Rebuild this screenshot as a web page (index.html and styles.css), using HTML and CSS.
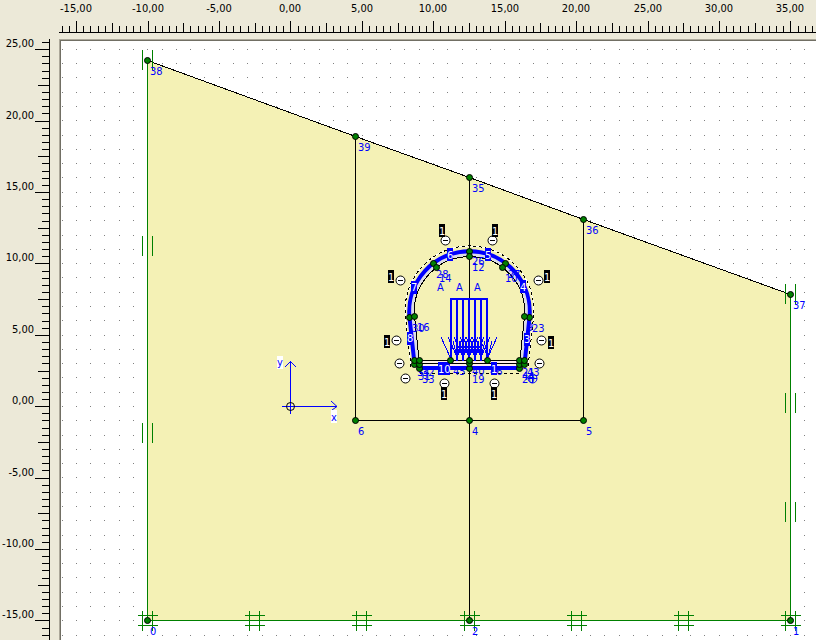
FILE: index.html
```
<!DOCTYPE html>
<html lang="en">
<head>
<meta charset="utf-8">
<title>Tunnel geometry model</title>
<link rel="stylesheet" href="styles.css">
</head>
<body>
<main class="editor">
  <div class="corner"></div>
  <svg class="ruler ruler-x" id="ruler-x" aria-label="Horizontal ruler"></svg>
  <svg class="ruler ruler-y" id="ruler-y" aria-label="Vertical ruler"></svg>
  <div class="viewport">
    <svg class="drawing" role="img" aria-label="Tunnel cross-section geometry">
      <defs>
        <circle id="node" class="node" r="3"/>
        <g id="minus"><circle class="sign" r="4.5"/><path class="sign-bar" d="M-2.5 0h5"/></g>
        <path id="fix-x" class="support" d="M-5 -10v20M5 -10v20"/>
        <path id="fix-xy" class="support" d="M-5 -10v20M5 -10v20M-10 -5h20M-10 5h20"/>
        <path id="head" class="load-head" d="M-9 -24L0 -4L9 -24M-4 -20L0 -4L4 -20"/>
        <path id="head-side" class="load-head" d="M-9 -24L0 -4L4 -20"/>
      </defs>
      <g transform="translate(-61 -41)">
        <g id="grid" class="grid"></g>

        <path class="soil" d="M147.500 60.500L355.500 136.500L469.500 177.500L583.500 219.500L790.500 294.500V620.500H147.500Z"/>
        <path class="edge" d="M147.500 60.500L355.500 136.500L469.500 177.500L583.500 219.500L790.500 294.500M355.500 136V420.500H583.500V219M469.500 177V620"/>
        <path class="boundary" d="M147.500 60V620.500H790.500V294"/>

        <use href="#fix-x" x="147.500" y="60"/><use href="#fix-x" x="147.500" y="246"/><use href="#fix-x" x="147.500" y="433"/>
        <use href="#fix-x" x="790.500" y="294"/><use href="#fix-x" x="790.500" y="403"/><use href="#fix-x" x="790.500" y="512"/>
        <use href="#fix-xy" x="147.500" y="620.500"/><use href="#fix-xy" x="254.500" y="620.500"/><use href="#fix-xy" x="361.500" y="620.500"/><use href="#fix-xy" x="469.500" y="620.500"/><use href="#fix-xy" x="576.500" y="620.500"/><use href="#fix-xy" x="683.500" y="620.500"/><use href="#fix-xy" x="790.500" y="620.500"/>

        <g class="axes">
          <path d="M282 406.500H337M290.500 414V361M285 367L290.500 361.500L296 367M331 401L337 406.500L332 410"/>
          <circle class="origin" cx="290.500" cy="406.500" r="4"/>
          <rect class="axis-tag" x="277" y="356" width="6" height="13"/>
          <rect class="axis-tag" x="331" y="410" width="6" height="13"/>
        </g>

        <path class="lining" d="M414.500 364L409.500 317.500A60.300 60.300 0 1 1 529.500 317.500L524.500 364H519.500L524.500 316.500A55.200 55.200 0 1 0 414.500 316.500L419.500 364Z"/>
        <path class="floor" d="M414 360.500H525V368H414Z"/>
        <path class="edge" d="M469.500 251V368M414 360.500H525M414 363.500H525M419.500 364L414.500 316.500A55.200 55.200 0 1 1 524.500 316.500L519.500 364"/>
        <path class="offset-base" d="M411 367L405.500 317.500A64.400 64.400 0 1 1 533.500 317.500L528 367"/>
        <path class="offset" d="M411 367L405.500 317.500A64.400 64.400 0 1 1 533.500 317.500L528 367M420 373.500H519"/>
        <path class="beam" d="M414.500 364L409.500 317.500A60.300 60.300 0 1 1 529.500 317.500L524.500 364M418 368H521"/>

        <path class="load" d="M451 361V299H487V361M457 299V361M463 299V361M469 299V361M475 299V361M481 299V361"/>
        <use href="#head-side" x="450" y="361"/><use href="#head" x="457" y="361"/><use href="#head" x="463" y="361"/><use href="#head" x="469" y="361"/><use href="#head" x="475" y="361"/><use href="#head" x="481" y="361"/><use href="#head" x="488" y="361"/>

        <g class="ids">
          <text x="150" y="75">38</text><text x="358" y="151">39</text><text x="472" y="192">35</text><text x="586" y="234">36</text><text x="793" y="309">37</text>
          <text x="358" y="435">6</text><text x="472" y="435">4</text><text x="586" y="435">5</text>
          <text x="150" y="635">0</text><text x="472" y="635">2</text><text x="793" y="635">1</text>
          <text x="472" y="265">26</text><text x="472" y="271">12</text>
          <text x="436" y="278">28</text><text x="439" y="282">14</text>
          <text x="508" y="278">27</text><text x="505" y="282">10</text>
          <text x="412" y="332">30</text><text x="417" y="331">16</text>
          <text x="527" y="331">9</text><text x="532" y="332">23</text>
          <text x="417" y="376">34</text><text x="422" y="376">32</text><text x="418" y="380">31</text><text x="422" y="383">33</text>
          <text x="453" y="375">45</text><text x="472" y="375">40</text><text x="490" y="375">46</text><text x="472" y="383">19</text>
          <text x="522" y="376">21</text><text x="527" y="376">43</text><text x="522" y="380">44</text><text x="522" y="383">20</text>
          <text x="437" y="291">A</text><text x="456" y="291">A</text><text x="474" y="291">A</text>
          <text x="277" y="366">y</text><text x="331" y="421">x</text>
        </g>

        <g class="beam-tags">
          <rect x="411" y="281" width="6" height="13"/><rect x="447" y="248" width="6" height="13"/><rect x="485" y="248" width="6" height="13"/><rect x="520" y="280" width="6" height="13"/>
          <rect x="407" y="332" width="6" height="13"/><rect x="524" y="333" width="6" height="13"/><rect x="438" y="362" width="12" height="13"/><rect x="491" y="362" width="6" height="13"/>
          <text x="411" y="291">7</text><text x="447" y="259">6</text><text x="485" y="259">5</text><text x="520" y="291">4</text>
          <text x="407" y="342">8</text><text x="524" y="343">3</text><text x="438" y="373">10</text><text x="491" y="373">1</text>
        </g>

        <use href="#node" x="147.500" y="60.500"/><use href="#node" x="355.500" y="136.500"/><use href="#node" x="469.500" y="177.500"/><use href="#node" x="583.500" y="219.500"/><use href="#node" x="790.500" y="294.500"/>
        <use href="#node" x="355.500" y="420.500"/><use href="#node" x="469.500" y="420.500"/><use href="#node" x="583.500" y="420.500"/>
        <use href="#node" x="147.500" y="620.500"/><use href="#node" x="469.500" y="620.500"/><use href="#node" x="790.500" y="620.500"/>
        <use href="#node" x="469.500" y="251.500"/><use href="#node" x="469.500" y="256.500"/>
        <use href="#node" x="433.500" y="263.500"/><use href="#node" x="436.500" y="267.500"/><use href="#node" x="505.500" y="263.500"/><use href="#node" x="502.500" y="267.500"/>
        <use href="#node" x="409.500" y="317.500"/><use href="#node" x="414.500" y="316.500"/><use href="#node" x="529.500" y="317.500"/><use href="#node" x="524.500" y="316.500"/>
        <use href="#node" x="414.500" y="364.500"/><use href="#node" x="419.500" y="368.500"/><use href="#node" x="419.500" y="364.500"/><use href="#node" x="414.500" y="360.500"/><use href="#node" x="419.500" y="360.500"/>
        <use href="#node" x="450.500" y="360.500"/><use href="#node" x="469.500" y="368.500"/><use href="#node" x="469.500" y="363.500"/><use href="#node" x="469.500" y="360.500"/><use href="#node" x="487.500" y="360.500"/>
        <use href="#node" x="519.500" y="368.500"/><use href="#node" x="519.500" y="364.500"/><use href="#node" x="524.500" y="364.500"/><use href="#node" x="519.500" y="360.500"/><use href="#node" x="524.500" y="360.500"/>

        <use href="#minus" x="445.500" y="240.500"/><use href="#minus" x="492.500" y="240.500"/><use href="#minus" x="400.500" y="280.500"/><use href="#minus" x="538.500" y="280.500"/>
        <use href="#minus" x="396.500" y="340.500"/><use href="#minus" x="541.500" y="340.500"/><use href="#minus" x="399.500" y="363.500"/><use href="#minus" x="539.500" y="363.500"/>
        <use href="#minus" x="405.500" y="378.500"/><use href="#minus" x="444.500" y="383.500"/><use href="#minus" x="494.500" y="383.500"/>
        <g class="plus"><circle cx="532.500" cy="378.500" r="4.500"/><path d="M528 378.500h9M532.500 374v9"/></g>

        <g class="side-tags">
          <rect x="439" y="224" width="6" height="13"/><rect x="492" y="224" width="6" height="13"/><rect x="388" y="270" width="6" height="13"/><rect x="544" y="270" width="6" height="13"/>
          <rect x="384" y="335" width="6" height="13"/><rect x="548" y="336" width="6" height="13"/><rect x="441" y="387" width="6" height="13"/><rect x="491" y="387" width="6" height="13"/>
          <text x="439" y="235">1</text><text x="492" y="235">1</text><text x="388" y="281">1</text><text x="544" y="281">1</text>
          <text x="384" y="346">1</text><text x="548" y="347">1</text><text x="441" y="398">1</text><text x="491" y="398">1</text>
        </g>
      </g>
    </svg>
  </div>
</main>
<script src="rulers.js"></script>
</body>
</html>
```
FILE: styles.css
```
* { box-sizing: border-box; }

body {
  margin: 0;
  background: #ece9d8;
  font-family: "DejaVu Sans Condensed", "DejaVu Sans", sans-serif;
  font-size: 11px;
  color: #000;
}

.editor {
  display: grid;
  grid-template-columns: 59px minmax(0, 1fr);
  grid-template-rows: 39px minmax(0, 1fr);
  height: 100vh;
  overflow: hidden;
}

.ruler {
  display: block;
  width: 100%;
  height: 100%;
  overflow: visible;
}

.ruler path {
  stroke: #000;
  fill: none;
  shape-rendering: crispEdges;
}

.ruler-x text { text-anchor: middle; }
.ruler-y text { text-anchor: end; }

.viewport {
  border-top: 1px solid #aca899;
  border-left: 1px solid #aca899;
  overflow: hidden;
}

.drawing {
  display: block;
  width: 100%;
  height: 100%;
  border-top: 1px solid #716f64;
  border-left: 1px solid #716f64;
  background: #fff;
}

.grid { fill: #808080; shape-rendering: crispEdges; }
.soil { fill: #f4f1b5; }
.edge { fill: none; stroke: #000; shape-rendering: crispEdges; }
.boundary, .support { fill: none; stroke: #008000; shape-rendering: crispEdges; }
.node { fill: #008000; stroke: #000; }

.axes path { fill: none; stroke: #00f; }
.origin { fill: none; stroke: #000; }
.axis-tag { fill: #fff; }

.lining { fill: #dcdce6; }
.floor { fill: #fdeee8; }
.beam { fill: none; stroke: #00f; stroke-width: 4; }
.offset-base { fill: none; stroke: #fff; shape-rendering: crispEdges; }
.offset { fill: none; stroke: #000; stroke-dasharray: 3 3; shape-rendering: crispEdges; }

.load { fill: none; stroke: #00f; stroke-width: 2; shape-rendering: crispEdges; }
.load-head { fill: none; stroke: #00f; stroke-width: 1; shape-rendering: crispEdges; }

.ids { fill: #00f; }
.beam-tags rect { fill: #00f; }
.beam-tags text, .side-tags text { fill: #fff; }
.side-tags rect { fill: #000; }

.sign { fill: #fff; stroke: #000; }
.sign-bar { stroke: #000; shape-rendering: crispEdges; }
.plus { fill: none; stroke: #00f; }
```
FILE: rulers.js
```
const NS = 'http://www.w3.org/2000/svg';
const SCALE = 14.285;

function add(parent, name, attrs, text) {
  const el = document.createElementNS(NS, name);
  for (const key in attrs) el.setAttribute(key, attrs[key]);
  if (text) el.textContent = text;
  parent.appendChild(el);
}

function clear(el) {
  while (el.firstChild) el.removeChild(el.firstChild);
}

function label(value) {
  return value.toFixed(2).replace('.', ',');
}

function draw() {
  const rulerX = document.getElementById('ruler-x');
  const rulerY = document.getElementById('ruler-y');
  const grid = document.getElementById('grid');
  [rulerX, rulerY, grid].forEach(clear);

  // Horizontal ruler: a tick each half unit, taller at 2.5 and 5 units.
  let d = 'M0 32.5H' + innerWidth;
  for (let i = -32; ; i++) {
    const x = Math.round(290.4 + SCALE * i / 2) - 59;
    if (x + 59 > innerWidth) break;
    const top = i % 10 === 0 ? 21 : i % 5 === 0 ? 23 : 26;
    d += 'M' + (x + 0.5) + ' ' + top + 'V32';
    if (i % 10 === 0) add(rulerX, 'text', { x: x, y: 12 }, label(i / 2));
  }
  add(rulerX, 'path', { d: d });

  // Vertical ruler, with values growing upwards.
  d = 'M49.5 0V' + innerHeight;
  for (let i = 50; ; i--) {
    const y = Math.round(406.2 - 14.28 * i / 2) - 39;
    if (y + 39 > innerHeight) break;
    const left = i % 10 === 0 ? 35 : i % 5 === 0 ? 38 : 42;
    d += 'M' + left + ' ' + (y + 0.5) + 'H49';
    if (i % 10 === 0) add(rulerY, 'text', { x: 34, y: y - 2 }, label(i / 2));
  }
  d += 'M42 3.5H49';
  add(rulerY, 'path', { d: d });

  // Snap grid, one dot per unit.
  d = '';
  for (let j = 25; ; j--) {
    const y = Math.round(406 - SCALE * j);
    if (y > innerHeight) break;
    for (let i = -16; ; i++) {
      const x = Math.round(290.2 + SCALE * i);
      if (x > innerWidth) break;
      d += 'M' + x + ' ' + y + 'h1v1h-1z';
    }
  }
  add(grid, 'path', { d: d });
}

draw();
addEventListener('resize', draw);
```
